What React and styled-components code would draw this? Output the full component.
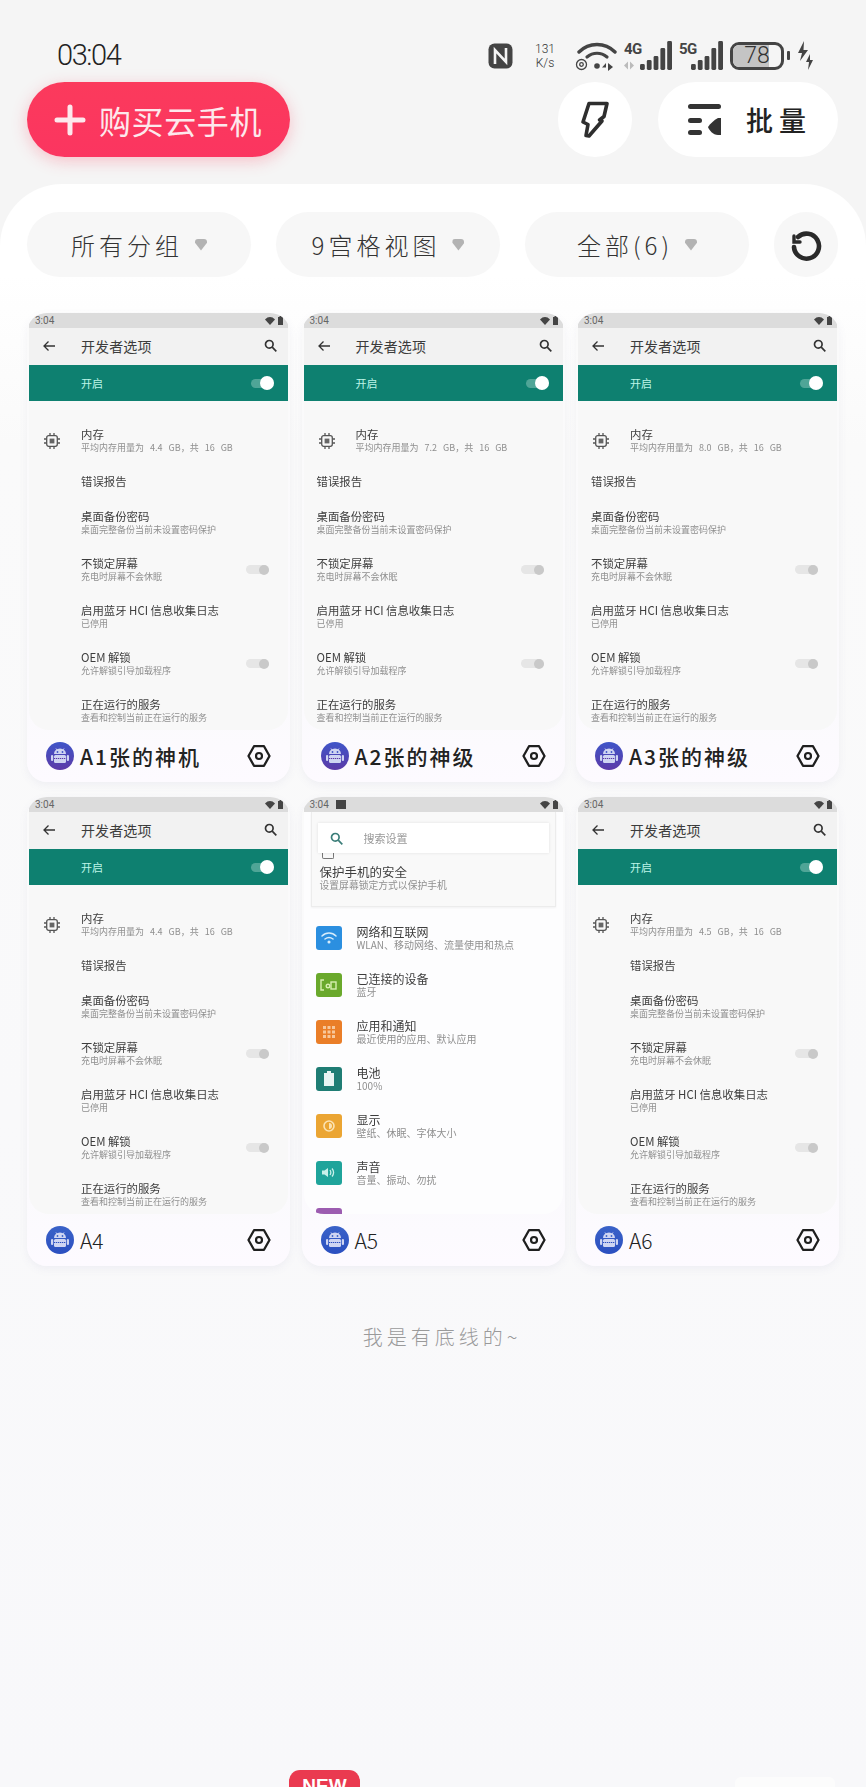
import React from "react";
import styled, { createGlobalStyle } from "styled-components";

const CJK = `"Noto Sans CJK SC", "Noto Sans", sans-serif`;

const Global = createGlobalStyle`
  html, body { margin: 0; padding: 0; background: #f5f5f5; }
  * { box-sizing: border-box; }
  body { font-family: ${CJK}; }
`;

const Page = styled.div`
  width: 866px; height: 1787px; overflow: hidden;
  display: flex; flex-direction: column; background: #f5f5f5;
`;
const StatusBar = styled.div`
  flex: none; height: 29px; margin-top: 41px; padding: 0 52px 0 57px;
  display: flex; align-items: center; justify-content: space-between;
`;
const Time = styled.span`
  font: 300 29px/29px "Roboto", sans-serif; letter-spacing: -1.4px; color: #222;
`;
const StatusIcons = styled.div`display: flex; align-items: center; gap: 7px;`;
const Speed = styled.div`
  width: 24px; margin: 0 11px 0 12px; text-align: center;
  font: 300 12px/14px "Roboto", sans-serif; color: #333;
`;
const Net = styled.div`position: relative; display: flex; align-items: flex-end; height: 29px;`;
const NetLabel = styled.span`
  position: absolute; left: 0; top: 1px;
  font: 700 15px/15px "Roboto", sans-serif; letter-spacing: -.6px; color: #444;
`;
const Battery = styled.div`
  position: relative; width: 54px; height: 28px; border: 3px solid #444; border-radius: 9px;
  overflow: hidden; background: #f5f5f5; text-align: center;
  font: 300 23px/22px "Roboto", sans-serif; color: #333;
`;
const BatteryFill = styled.div`
  position: absolute; inset: 0 26% 0 0; background: #c4c4c4; z-index: 0;
`;
const BatteryText = styled.span`position: relative; z-index: 1;`;
const BatteryTip = styled.div`width: 3px; height: 9px; background: #444; border-radius: 1px; margin-left: -4px;`;

const Actions = styled.div`
  flex: none; margin-top: 12px; padding: 0 28px 0 27px; height: 75px;
  display: flex; align-items: stretch; gap: 26px;
`;
const BuyButton = styled.div`
  width: 263px; border-radius: 38px; margin-right: auto;
  display: flex; align-items: center; padding-left: 27px; gap: 13px;
  background: linear-gradient(180deg, #fb3a5c 0%, #fb3560 100%);
  box-shadow: 0 4px 16px rgba(250, 60, 90, .28);
  color: #fde8ec; font-size: 32px; font-weight: 400; letter-spacing: .6px;
`;
const RoundButton = styled.div`
  width: 74px; border-radius: 38px; background: #fff;
  display: flex; align-items: center; justify-content: center;
`;
const BatchButton = styled.div`
  width: 180px; border-radius: 38px; background: #fff;
  display: flex; align-items: center; padding-left: 30px; gap: 25px;
  font-size: 27px; font-weight: 500; letter-spacing: 6px; color: #222;
`;

const Sheet = styled.div`
  flex: 1; min-height: 0; margin-top: 27px; padding: 28px 27px 0 27px;
  border-radius: 62px 62px 0 0;
  background: linear-gradient(180deg, #fff 0, #fff 90px, #fafafa 260px, #f8f8fa 100%);
  display: flex; flex-direction: column; align-items: stretch;
`;
const Filters = styled.div`display: flex; gap: 25px; height: 65px; flex: none;`;
const FilterPill = styled.div`
  width: 224px; border-radius: 33px; background: #f7f7f7;
  display: flex; align-items: center; justify-content: center; gap: 12px;
  font-size: 24px; font-weight: 300; letter-spacing: 4px; color: #333;
`;
const Caret = styled.i`
  width: 12px; height: 12px; background: #b3b3b3; display: block;
  clip-path: polygon(0 0, 50% 0, 100% 0, 100% 35%, 50% 100%, 0 35%);
  border-radius: 3px;
`;
const RefreshButton = styled.div`
  width: 64px; border-radius: 32px; background: #f7f7f7;
  display: flex; align-items: center; justify-content: center;
`;

const Grid = styled.div`
  flex: none; margin-top: 36px; display: grid; grid-template-columns: repeat(3, 263px);
  justify-content: space-between; row-gap: 15px;
`;
const Card = styled.div`
  height: 469px; border-radius: 20px; overflow: hidden;
  background: linear-gradient(180deg, #fafafa 0, #fbfafd 85%, #fdfaff 100%);
  box-shadow: 0 3px 8px rgba(120, 110, 160, .08);
  display: flex; flex-direction: column;
`;
const Screen = styled.div`
  height: 417px; margin: 0 2px; overflow: hidden; flex: none;
  border-radius: 10px 10px 20px 20px;
  background: ${p => (p.$light ? "#fdfdfe" : "#f8f8f8")};
  display: flex; flex-direction: column;
  filter: blur(.35px);
`;
const PhoneStatus = styled.div`
  height: 15px; flex: none; background: #dcdcdc; padding: 0 5px 0 6px;
  display: flex; align-items: center; gap: 7px;
  font: 400 10px/15px "Roboto", sans-serif; color: #666;
`;
const StatusSpacer = styled.span`margin-left: auto; display: flex; align-items: center; gap: 3px;`;
const Notice = styled.i`width: 10px; height: 9px; background: #444; display: block;`;
const AppBar = styled.div`
  height: 37px; flex: none; background: #f2f2f2; padding: 0 11px 2px 14px;
  display: flex; align-items: center; color: #333;
`;
const AppTitle = styled.span`
  margin-left: 26px; margin-right: auto; font-size: 14px; line-height: 20px; color: #3c3c3c; letter-spacing: .1px;
`;
const MasterBar = styled.div`
  height: 36px; flex: none; background: #0e8070; padding: 0 14px 0 52px;
  display: flex; align-items: center; justify-content: space-between;
  font-size: 11px; color: #bdf5e8;
`;
const SwitchTrack = styled.div`
  position: relative; width: 23px; height: 9px; border-radius: 5px;
  background: ${p => (p.$on ? "#4fa597" : "#e6e6e6")};
`;
const SwitchKnob = styled.i`
  position: absolute; right: 0; top: 50%; transform: translateY(-50%);
  width: ${p => (p.$on ? 14 : 10)}px; height: ${p => (p.$on ? 14 : 10)}px; border-radius: 50%;
  background: ${p => (p.$on ? "#fff" : "#c9c9c9")};
`;
const Body = styled.div`padding-top: 16px; display: flex; flex-direction: column;`;
const Row = styled.div`
  position: relative; flex: none; height: ${p => (p.$single ? 35 : 47)}px;
  padding: 0 19px 0 ${p => p.$indent}px;
  display: flex; align-items: center; justify-content: space-between;
`;
const RowIcon = styled.div`
  position: absolute; left: 15px; top: 50%; transform: translateY(-50%);
  display: flex;
`;
const RowText = styled.div`display: flex; flex-direction: column; white-space: nowrap; min-width: 0;`;
const RowTitle = styled.span`
  font-size: ${p => (p.$large ? 12 : 11.4)}px; line-height: 13px; color: #3d3d3d;
`;
const RowSub = styled.span`
  font-size: ${p => (p.$large ? 10 : 9)}px; line-height: 13px; color: #8f8f8f; word-spacing: 4px;
`;

const SearchCard = styled.div`
  position: relative; flex: none; height: 95px; margin: 0 7px; padding: 41px 8px 0;
  border: 1px solid #ececec; border-top: 0; background: #f9f9f9;
  box-shadow: 0 1px 2px rgba(0,0,0,.05);
  display: flex; flex-direction: column;
`;
const SearchBox = styled.div`
  position: absolute; left: 6px; right: 6px; top: 11px; height: 30px; background: #fff;
  box-shadow: 0 0 3px rgba(0,0,0,.1); display: flex; align-items: center; padding-left: 12px;
  gap: 21px; font-size: 11px; color: #999;
`;
const SafetyIcon = styled.i`
  width: 12px; height: 6px; margin-left: 2px; border: 1.5px solid #777; border-top: 0; border-radius: 0 0 2px 2px; display: block; flex: none;
`;
const SafetyTitle = styled.span`font-size: 12.5px; line-height: 12px; margin-top: 7px; color: #3d3d3d;`;
const SafetySub = styled.span`font-size: 9.8px; line-height: 14px; color: #8f8f8f;`;
const SettingList = styled.div`padding: 7px 0 0 12px; display: flex; flex-direction: column;`;
const SettingRow = styled.div`display: flex; align-items: center; gap: 15px; height: 47px; flex: none;`;
const SettingIcon = styled.div`
  width: 26px; height: 24px; border-radius: 3px; flex: none; background: ${p => p.$color};
  display: flex; align-items: center; justify-content: center;
`;

const CardFooter = styled.div`
  flex: 1; padding: 0 19px 0 19px; display: flex; align-items: center;
`;
const Label = styled.span`
  margin-left: 6px; margin-right: auto; font-size: 21px; line-height: 28px; color: #222;
  font-weight: ${p => (p.$bold ? 500 : 300)}; letter-spacing: ${p => (p.$bold ? "2px" : "0")};
`;

const EndNote = styled.div`
  flex: none; margin-top: 56px; padding-left: 18px; text-align: center; font-size: 20px; line-height: 30px; font-weight: 300;
  letter-spacing: 4px; color: #9a9a9a;
`;
const BottomStrip = styled.div`
  flex: none; margin-top: 418px; padding-left: 262px; display: flex; align-items: flex-start;
`;
const NewBadge = styled.div`
  width: 71px; height: 30px; border-radius: 11px 11px 0 0; background: #ea3a50; color: #fff;
  font: 700 19px/28px "Liberation Sans", sans-serif; text-align: center; padding-top: 2px;
`;
const FaintTab = styled.div`
  width: 100px; height: 12px; margin: 7px 0 0 375px; background: #fcfcfc; border-radius: 6px 6px 0 0;
`;

const Nfc = () => (
  <svg width="27" height="28" viewBox="0 0 27 28" fill="none">
    <rect x="1.5" y="1.5" width="24" height="25" rx="6" fill="#444" />
    <path d="M8 22V8l11 12V6" stroke="#f5f5f5" strokeWidth="2.6" />
  </svg>
);
const Wifi = () => (
  <svg width="42" height="30" viewBox="0 0 42 30" fill="none" stroke="#444" strokeLinecap="round">
    <path d="M4 11C14 1 30 1 40 11" strokeWidth="3.4" />
    <path d="M12 16c6-5 14-5 20 0" strokeWidth="3.2" />
    <circle cx="6.5" cy="23.5" r="5" strokeWidth="1.3" />
    <circle cx="6.5" cy="23.5" r="1.8" strokeWidth="1.3" />
    <circle cx="22" cy="25" r="2.8" fill="#444" stroke="none" />
    <path d="M31 22l-4 4.5h4zM33 22v8l5-4z" fill="#444" stroke="none" />
  </svg>
);
const Bars = ({ width, heights, dim }) => (
  <svg width={width} height="29" viewBox={`0 0 ${width} 29`}>
    {dim && <path d="M4 20.500v8L0 24.500zM6 20.500v8l4-4z" fill="#bbb" />}
    {heights.map((h, i) => (
      <rect key={i} x={width - (heights.length - i) * 6.8 + 2} y={29 - h} width="4.800" height={h} rx="1.4" fill="#444" />
    ))}
  </svg>
);
const ChargeBolts = () => (
  <svg width="17" height="30" viewBox="0 0 17 30" fill="#444">
    <path d="M7 0L1 12h4l-2 8 8-11H6.500z" />
    <path d="M13 13l-4 8h3l-1 8 5-10h-3z" />
  </svg>
);
const Plus = () => (
  <svg width="32" height="32" viewBox="0 0 32 32" fill="none" stroke="#fde8ec" strokeWidth="5" strokeLinecap="round">
    <path d="M16 3v26M3 16h26" />
  </svg>
);
const Flash = () => (
  <svg width="30" height="37" viewBox="0 0 30 37" fill="none" stroke="#2e2e2e" strokeWidth="3.6" strokeLinejoin="round">
    <path d="M9 2.500h18l-3 13-4.500 3.500 2.500 1L9 35 6 34.500l2-11L3 21z" />
  </svg>
);
const BatchIcon = () => (
  <svg width="33" height="32" viewBox="0 0 33 32" fill="#333">
    <rect x="0" y="0" width="33" height="5" rx="2.5" />
    <rect x="0" y="14" width="14" height="5" rx="2.5" />
    <rect x="0" y="26" width="14" height="5" rx="2.5" />
    <path d="M33 14v17h-3c-5 0-9-5-10-8 2-3 6-7 10-9z" />
  </svg>
);
const Refresh = () => (
  <svg width="34" height="34" viewBox="0 0 34 34" fill="none" stroke="#2a2a2a" strokeWidth="4.600" strokeLinecap="round">
    <path d="M9 9a12.500 12.500 0 1 1-4 10" />
    <path d="M5 8v6h6" strokeWidth="3.400" />
  </svg>
);
const MiniWifi = () => (
  <svg width="10" height="8" viewBox="0 0 10 8"><path d="M0 2.500C3-.8 7-.8 10 2.500L5 8z" fill="#444" /></svg>
);
const MiniBattery = () => (
  <svg width="5" height="9" viewBox="0 0 5 9"><path d="M1.500 0h2v1H5v8H0V1h1.500z" fill="#444" /></svg>
);
const Back = () => (
  <svg width="12" height="12" viewBox="0 0 12 12" fill="none" stroke="#333" strokeWidth="1.300">
    <path d="M12 6H1M5.500 1.500L1 6l4.500 4.500" />
  </svg>
);
const Search = ({ color = "#333" }) => (
  <svg width="13" height="13" viewBox="0 0 13 13" fill="none" stroke={color} strokeWidth="1.700">
    <circle cx="5.300" cy="5.300" r="3.800" />
    <path d="M8.200 8.200L12.300 12.300" />
  </svg>
);
const Chip = () => (
  <svg width="16" height="16" viewBox="0 0 16 16" fill="none" stroke="#555" strokeWidth="1.300">
    <rect x="2.700" y="2.700" width="10.600" height="10.600" rx="2" />
    <rect x="5.600" y="5.600" width="4.800" height="4.800" fill="#666" stroke="none" />
    <path d="M0 6h2.500M0 10h2.500M13.500 6H16M13.500 10H16M6 0v2.500M10 0v2.500M6 13.500V16M10 13.500V16" />
  </svg>
);
const Avatar = ({ id, from, to }) => (
  <svg width="28" height="28" viewBox="0 0 28 28">
    <defs>
      <linearGradient id={id} x1="0" y1="0" x2="0" y2="1">
        <stop offset="0" stopColor={from} />
        <stop offset="1" stopColor={to} />
      </linearGradient>
    </defs>
    <circle cx="14" cy="14" r="14" fill={`url(#${id})`} />
    <path d="M8 12a6 5.500 0 0 1 12 0z" fill="#cfd5f2" />
    <path d="M10 6.500l1.500 2M18 6.500l-1.500 2" stroke="#cfd5f2" strokeWidth="1" />
    <circle cx="11.500" cy="10" r=".9" fill={from} />
    <circle cx="16.500" cy="10" r=".9" fill={from} />
    <rect x="8" y="13" width="12" height="8" rx="1.500" fill="#cfd5f2" />
    <rect x="5" y="13" width="2.200" height="6" rx="1.100" fill="#cfd5f2" />
    <rect x="20.800" y="13" width="2.200" height="6" rx="1.100" fill="#cfd5f2" />
    <path d="M8 16.500h12" stroke={to} strokeWidth="1.200" strokeDasharray="1.300 .7" />
  </svg>
);
const Hex = () => (
  <svg width="24" height="24" viewBox="0 0 24 24" fill="none" stroke="#1f1f1f">
    <path d="M7 2.200h10L22.500 12 17 21.800H7L1.500 12z" strokeWidth="2.300" strokeLinejoin="round" />
    <circle cx="12" cy="12" r="3" strokeWidth="2.200" />
  </svg>
);
const Glyph = ({ kind }) => {
  if (kind === "wifi") return (
    <svg width="16" height="12" viewBox="0 0 16 12" fill="none" stroke="#d6ecfb" strokeWidth="1.500" strokeLinecap="round">
      <path d="M1 4c4-4 10-4 14 0M4 7c2.500-2 5.500-2 8 0" /><circle cx="8" cy="10" r=".8" fill="#d6ecfb" />
    </svg>
  );
  if (kind === "link") return (
    <svg width="18" height="12" viewBox="0 0 18 12" fill="none" stroke="#d7efb0" strokeWidth="1.400">
      <path d="M4 1H1v10h3" /><rect x="11" y="3" width="5" height="7" /><circle cx="8" cy="7" r="1.800" />
    </svg>
  );
  if (kind === "apps") return (
    <svg width="12" height="12" viewBox="0 0 12 12" fill="#f7c79b">
      {[0, 1, 2].flatMap(r => [0, 1, 2].map(c => <rect key={`${r}${c}`} x={c * 4.500} y={r * 4.500} width="3" height="3" />))}
    </svg>
  );
  if (kind === "battery") return (
    <svg width="10" height="15" viewBox="0 0 10 15"><path d="M3 0h4v2h3v13H0V2h3z" fill="#e8f4f2" /></svg>
  );
  if (kind === "display") return (
    <svg width="14" height="14" viewBox="0 0 14 14" fill="none" stroke="#fbe3b4" strokeWidth="1.600">
      <circle cx="7" cy="7" r="5" /><path d="M7 4a3 3 0 0 1 0 6z" fill="#fbe3b4" stroke="none" />
    </svg>
  );
  if (kind === "sound") return (
    <svg width="15" height="13" viewBox="0 0 15 13" fill="none" stroke="#c8f0ea" strokeWidth="1.300">
      <path d="M1 4.500h2.500L7 2v9L3.500 8.500H1z" fill="#c8f0ea" stroke="none" /><path d="M9 4c1 1.500 1 3.500 0 5M11 2.500c2 2.500 2 5.500 0 8" />
    </svg>
  );
  return null;
};

const devRows = gb => [
  { t: "内存", s: `平均内存用量为 ${gb} GB，共 16 GB`, chip: true },
  { t: "错误报告", single: true },
  { t: "桌面备份密码", s: "桌面完整备份当前未设置密码保护" },
  { t: "不锁定屏幕", s: "充电时屏幕不会休眠", sw: true },
  { t: "启用蓝牙 HCI 信息收集日志", s: "已停用" },
  { t: "OEM 解锁", s: "允许解锁引导加载程序", sw: true },
  { t: "正在运行的服务", s: "查看和控制当前正在运行的服务" },
];
const settings = [
  { c: "#2b8fe0", g: "wifi", t: "网络和互联网", s: "WLAN、移动网络、流量使用和热点" },
  { c: "#6aa92c", g: "link", t: "已连接的设备", s: "蓝牙" },
  { c: "#ea7e28", g: "apps", t: "应用和通知", s: "最近使用的应用、默认应用" },
  { c: "#1f7d74", g: "battery", t: "电池", s: "100%" },
  { c: "#eba533", g: "display", t: "显示", s: "壁纸、休眠、字体大小" },
  { c: "#1fa49b", g: "sound", t: "声音", s: "音量、振动、勿扰" },
  { c: "#9c5cb0", g: "", t: "存储", s: "" },
];
const cards = [
  { id: "a1", name: "A1张的神机", gb: "4.4", indent: 52, bold: true, from: "#3f55c8", to: "#5c3aa8" },
  { id: "a2", name: "A2张的神级", gb: "7.2", indent: 13, bold: true, from: "#3f55c8", to: "#5c3aa8" },
  { id: "a3", name: "A3张的神级", gb: "8.0", indent: 13, bold: true, from: "#3f55c8", to: "#5c3aa8" },
  { id: "a4", name: "A4", gb: "4.4", indent: 52, from: "#3a62c8", to: "#2b4fc0" },
  { id: "a5", name: "A5", settings: true, from: "#3a62c8", to: "#2b4fc0" },
  { id: "a6", name: "A6", gb: "4.5", indent: 52, from: "#3a62c8", to: "#2b4fc0" },
];

const DevScreen = ({ gb, indent }) => (
  <Screen>
    <PhoneStatus>3:04<StatusSpacer><MiniWifi /><MiniBattery /></StatusSpacer></PhoneStatus>
    <AppBar><Back /><AppTitle>开发者选项</AppTitle><Search /></AppBar>
    <MasterBar>开启<SwitchTrack $on><SwitchKnob $on /></SwitchTrack></MasterBar>
    <Body>
      {devRows(gb).map(r => (
        <Row key={r.t} $single={r.single} $indent={r.chip ? 52 : indent}>
          {r.chip && <RowIcon><Chip /></RowIcon>}
          <RowText>
            <RowTitle>{r.t}</RowTitle>
            {r.s && <RowSub>{r.s}</RowSub>}
          </RowText>
          {r.sw && <SwitchTrack><SwitchKnob /></SwitchTrack>}
        </Row>
      ))}
    </Body>
  </Screen>
);
const SettingsScreen = () => (
  <Screen $light>
    <PhoneStatus>3:04<Notice /><StatusSpacer><MiniWifi /><MiniBattery /></StatusSpacer></PhoneStatus>
    <SearchCard>
      <SearchBox><Search color="#3a7d78" />搜索设置</SearchBox>
      <SafetyIcon />
      <SafetyTitle>保护手机的安全</SafetyTitle>
      <SafetySub>设置屏幕锁定方式以保护手机</SafetySub>
    </SearchCard>
    <SettingList>
      {settings.map(r => (
        <SettingRow key={r.t}>
          <SettingIcon $color={r.c}><Glyph kind={r.g} /></SettingIcon>
          <RowText>
            <RowTitle $large>{r.t}</RowTitle>
            <RowSub $large>{r.s}</RowSub>
          </RowText>
        </SettingRow>
      ))}
    </SettingList>
  </Screen>
);

export default function App() {
  return (
    <Page>
      <Global />
      <StatusBar>
        <Time>03:04</Time>
        <StatusIcons>
          <Nfc />
          <Speed>131<br />K/s</Speed>
          <Wifi />
          <Net><NetLabel>4G</NetLabel><Bars width="48" heights={[6, 10, 14, 22, 29]} dim /></Net>
          <Net><NetLabel>5G</NetLabel><Bars width="44" heights={[6, 10, 14, 22, 29]} /></Net>
          <Battery><BatteryFill /><BatteryText>78</BatteryText></Battery>
          <BatteryTip />
          <ChargeBolts />
        </StatusIcons>
      </StatusBar>
      <Actions>
        <BuyButton><Plus />购买云手机</BuyButton>
        <RoundButton><Flash /></RoundButton>
        <BatchButton><BatchIcon />批量</BatchButton>
      </Actions>
      <Sheet>
        <Filters>
          <FilterPill>所有分组<Caret /></FilterPill>
          <FilterPill>9宫格视图<Caret /></FilterPill>
          <FilterPill>全部(6)<Caret /></FilterPill>
          <RefreshButton><Refresh /></RefreshButton>
        </Filters>
        <Grid>
          {cards.map(c => (
            <Card key={c.id}>
              {c.settings ? <SettingsScreen /> : <DevScreen gb={c.gb} indent={c.indent} />}
              <CardFooter>
                <Avatar id={c.id} from={c.from} to={c.to} />
                <Label $bold={c.bold}>{c.name}</Label>
                <Hex />
              </CardFooter>
            </Card>
          ))}
        </Grid>
        <EndNote>我是有底线的~</EndNote>
        <BottomStrip><NewBadge>NEW</NewBadge><FaintTab /></BottomStrip>
      </Sheet>
    </Page>
  );
}
